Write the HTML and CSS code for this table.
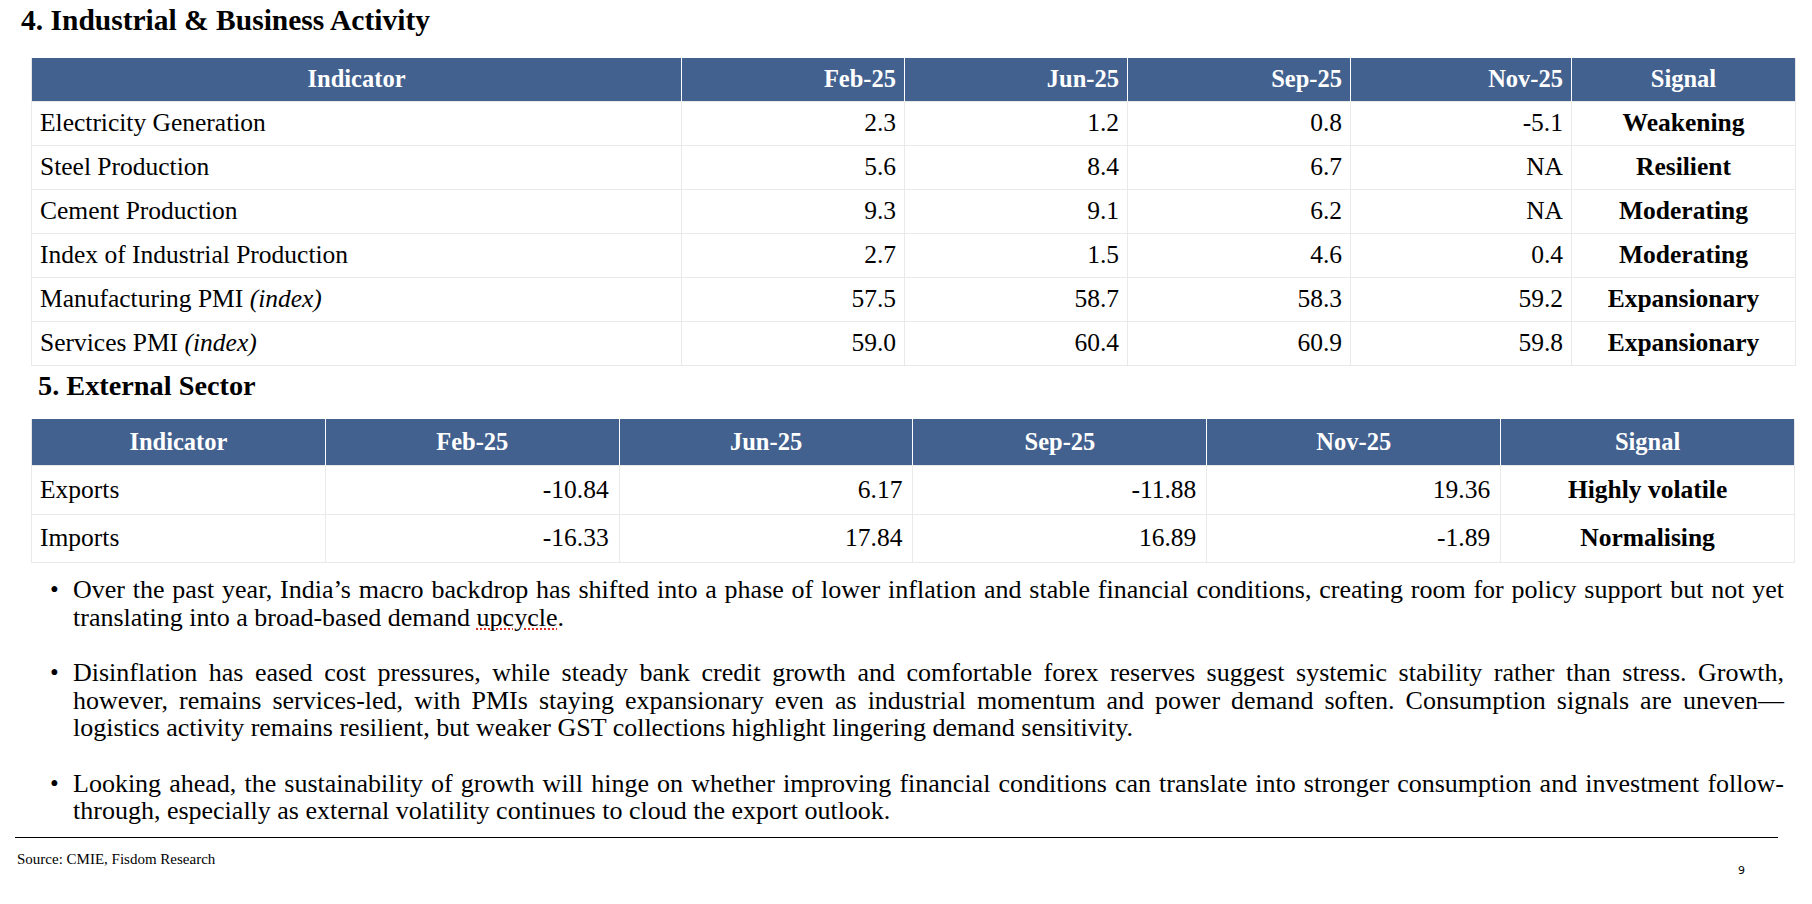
FILE: index.html
```html
<!DOCTYPE html>
<html lang="en">
<head>
<meta charset="utf-8">
<title>Industrial &amp; Business Activity</title>
<link rel="stylesheet" href="styles.css">
</head>
<body>
<main class="page">
  <h2 class="section-title section-title--first">4. Industrial &amp; Business Activity</h2>
  <table class="data data--industry">
    <colgroup>
      <col class="col-ind1">
      <col class="col-num1">
      <col class="col-num1">
      <col class="col-num1">
      <col class="col-nov1">
      <col class="col-sig1">
    </colgroup>
    <thead>
      <tr>
        <th class="center">Indicator</th>
        <th class="num">Feb-25</th>
        <th class="num">Jun-25</th>
        <th class="num">Sep-25</th>
        <th class="num">Nov-25</th>
        <th class="center">Signal</th>
      </tr>
    </thead>
    <tbody>
      <tr><td>Electricity Generation</td><td class="num">2.3</td><td class="num">1.2</td><td class="num">0.8</td><td class="num">-5.1</td><td class="sig">Weakening</td></tr>
      <tr><td>Steel Production</td><td class="num">5.6</td><td class="num">8.4</td><td class="num">6.7</td><td class="num">NA</td><td class="sig">Resilient</td></tr>
      <tr><td>Cement Production</td><td class="num">9.3</td><td class="num">9.1</td><td class="num">6.2</td><td class="num">NA</td><td class="sig">Moderating</td></tr>
      <tr><td>Index of Industrial Production</td><td class="num">2.7</td><td class="num">1.5</td><td class="num">4.6</td><td class="num">0.4</td><td class="sig">Moderating</td></tr>
      <tr><td>Manufacturing PMI <em>(index)</em></td><td class="num">57.5</td><td class="num">58.7</td><td class="num">58.3</td><td class="num">59.2</td><td class="sig">Expansionary</td></tr>
      <tr><td>Services PMI <em>(index)</em></td><td class="num">59.0</td><td class="num">60.4</td><td class="num">60.9</td><td class="num">59.8</td><td class="sig">Expansionary</td></tr>
    </tbody>
  </table>

  <h2 class="section-title section-title--second">5. External Sector</h2>
  <table class="data data--external">
    <thead>
      <tr>
        <th class="center">Indicator</th>
        <th class="center">Feb-25</th>
        <th class="center">Jun-25</th>
        <th class="center">Sep-25</th>
        <th class="center">Nov-25</th>
        <th class="center">Signal</th>
      </tr>
    </thead>
    <tbody>
      <tr><td>Exports</td><td class="num">-10.84</td><td class="num">6.17</td><td class="num">-11.88</td><td class="num">19.36</td><td class="sig">Highly volatile</td></tr>
      <tr><td>Imports</td><td class="num">-16.33</td><td class="num">17.84</td><td class="num">16.89</td><td class="num">-1.89</td><td class="sig">Normalising</td></tr>
    </tbody>
  </table>

  <ul class="notes">
    <li class="note"><span class="note__dot">•</span><p class="note__text">Over the past year, India’s macro backdrop has shifted into a phase of lower inflation and stable financial conditions, creating room for policy support but not yet translating into a broad-based demand <span class="spell">upcycle</span>.</p></li>
    <li class="note"><span class="note__dot">•</span><p class="note__text">Disinflation has eased cost pressures, while steady bank credit growth and comfortable forex reserves suggest systemic stability rather than stress. Growth, however, remains services-led, with PMIs staying expansionary even as industrial momentum and power demand soften. Consumption signals are uneven—logistics activity remains resilient, but weaker GST collections highlight lingering demand sensitivity.</p></li>
    <li class="note"><span class="note__dot">•</span><p class="note__text">Looking ahead, the sustainability of growth will hinge on whether improving financial conditions can translate into stronger consumption and investment follow-through, especially as external volatility continues to cloud the export outlook.</p></li>
  </ul>

  <footer class="footer">
    <span class="footer__source">Source: CMIE, Fisdom Research</span>
    <span class="footer__page">9</span>
  </footer>
</main>
</body>
</html>
```

FILE: styles.css
```css
* { box-sizing: border-box; }

html, body {
  margin: 0;
  padding: 0;
  background: #ffffff;
}

body {
  font-family: "Liberation Serif", "Times New Roman", serif;
  color: #000000;
  width: 1812px;
  height: 904px;
  overflow: hidden;
}

.page {
  display: flex;
  flex-direction: column;
}

.section-title {
  margin: 0;
  font-size: 29.5px;
  line-height: 29px;
  font-weight: bold;
}

.section-title--first {
  margin: 6px 0 0 21px;
}

.section-title--second {
  margin: 5px 0 0 38px;
  font-size: 28.3px;
}

.data {
  border-collapse: collapse;
  table-layout: fixed;
  width: 1764px;
  margin-left: 31px;
}

.data--industry { margin-top: 23px; }
.data--external { margin-top: 19px; }

.col-ind1 { width: 650px; }
.col-num1 { width: 223px; }
.col-nov1 { width: 221px; }
.col-sig1 { width: 224px; }

.data th {
  background: #42618f;
  color: #ffffff;
  font-weight: bold;
  font-size: 24.5px;
  padding: 0 8px;
  border-left: 1px solid #ffffff;
  border-right: 1px solid #ffffff;
  white-space: nowrap;
}

.data th:first-child { border-left: 1px solid #e6e6e6; }
.data th:last-child { border-right: 1px solid #e6e6e6; }

.data td {
  font-size: 25.5px;
  padding: 0 8px;
  border: 1px solid #e9e9e9;
  white-space: nowrap;
}

.data .num { text-align: right; }
.data .center { text-align: center; }
.data .sig {
  text-align: center;
  font-weight: bold;
  font-size: 25.5px;
}

.data--industry thead tr { height: 43px; }
.data--industry tbody tr { height: 44px; }

.data--external thead tr { height: 47px; }
.data--external tbody tr { height: 48.5px; }
.data--external td.num { padding-right: 10px; }

.notes {
  list-style: none;
  margin: 13px 28px 0 50px;
  padding: 0;
  display: flex;
  flex-direction: column;
  gap: 27.5px;
}

.note {
  display: flex;
  font-size: 26px;
  line-height: 27.7px;
}

.note__dot {
  width: 23px;
  flex: none;
  font-size: 25px;
}

.note__text {
  margin: 0;
  flex: 1;
  text-align: justify;
}

.spell {
  text-decoration: underline dotted #e0302a;
  text-decoration-thickness: 2px;
  text-underline-offset: 3px;
}

.footer {
  margin: 12px 34px 0 15px;
  border-top: 1.5px solid #000000;
  display: flex;
  justify-content: space-between;
  align-items: flex-start;
}

.footer__source {
  font-size: 15px;
  line-height: 18px;
  margin: 12px 0 0 2px;
}

.footer__page {
  font-family: "DejaVu Sans", sans-serif;
  font-size: 11px;
  line-height: 14px;
  margin: 26px 33px 0 0;
}
```
